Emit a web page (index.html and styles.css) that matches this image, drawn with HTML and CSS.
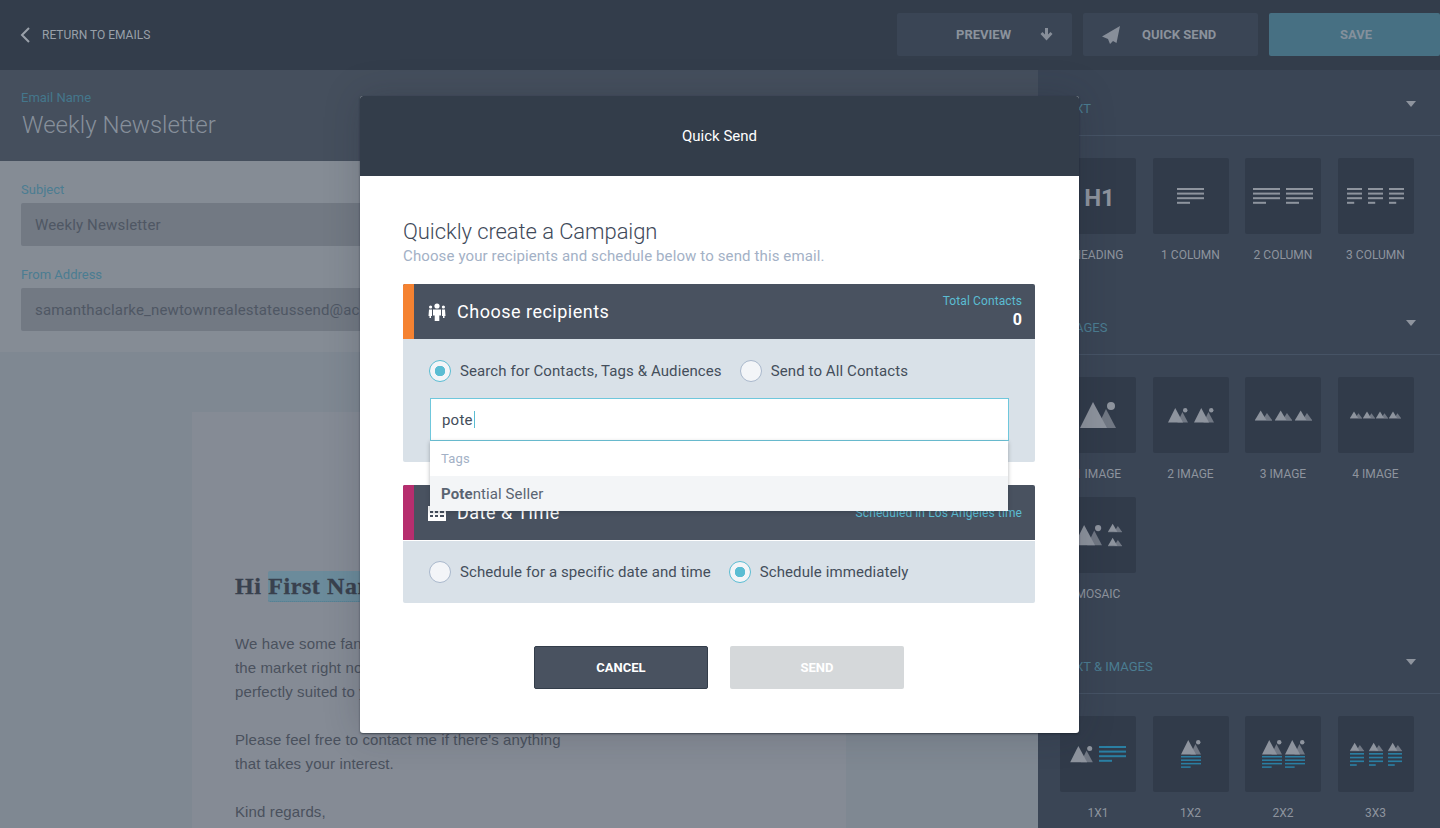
FILE: index.html
```html
<!DOCTYPE html>
<html>
<head>
<meta charset="utf-8">
<title>Quick Send</title>
<link rel="stylesheet" href="styles.css">
</head>
<body>
<svg class="defs" width="0" height="0">
  <symbol id="mtn" viewBox="0 0 36 27">
    <polygon points="17,26 26,7 36,26" fill="#717884"/>
    <polygon points="0,26 13,0 27,26" fill="#8e949e"/>
    <circle cx="31" cy="4" r="4" fill="#8e949e"/>
  </symbol>
  <symbol id="peaks" viewBox="0 0 27 16">
    <polygon points="12,15 19,4 27,15" fill="#717884"/>
    <polygon points="0,15 9,0 18,15" fill="#8e949e"/>
    <rect y="15" width="27" height="1" fill="#8e949e"/>
  </symbol>
  <symbol id="lines" viewBox="0 0 27 16" preserveAspectRatio="none">
    <rect width="27" height="2" fill="currentColor"/>
    <rect y="4.6" width="27" height="2" fill="currentColor"/>
    <rect y="9.2" width="27" height="2" fill="currentColor"/>
    <rect y="13.8" width="13" height="2" fill="currentColor"/>
  </symbol>
</svg>

<header class="topbar">
  <a class="back">
    <svg width="10" height="16" viewBox="0 0 10 16"><polyline points="9,1 2,8 9,15" fill="none" stroke="#9aa1aa" stroke-width="2"/></svg>
    RETURN TO EMAILS
  </a>
  <div class="actions">
    <button class="topbtn preview">PREVIEW
      <svg width="13" height="13" viewBox="0 0 13 13"><path d="M5 0h3v6.5l2.5-2.5 2 2-6 6.5-6-6.5 2-2L5 6.5z" fill="#878e99"/></svg>
    </button>
    <button class="topbtn quick">
      <svg width="18" height="18" viewBox="0 0 18 18"><path d="M18 0 0 10.5 6 13l2 5 3-3 3.500 2z" fill="#878e99"/></svg>
      QUICK SEND
    </button>
    <button class="topbtn save">SAVE</button>
  </div>
</header>

<div class="layout">
  <main class="editor">
    <section class="nameband">
      <label class="teal-label">Email Name</label>
      <h1>Weekly Newsletter</h1>
    </section>
    <section class="fields">
      <label class="teal-label">Subject</label>
      <div class="field">Weekly Newsletter</div>
      <label class="teal-label">From Address</label>
      <div class="field">samanthaclarke_newtownrealestateussend@ac</div>
    </section>
    <section class="canvas">
      <div class="paper">
        <h2>Hi <span class="merge">First Name</span></h2>
        <p>We have some fantastic properties on<br>the market right now that could be<br>perfectly suited to your needs.</p>
        <p>Please feel free to contact me if there's anything<br>that takes your interest.</p>
        <p>Kind regards,</p>
      </div>
    </section>
  </main>

  <aside class="sidebar">
    <section class="group">
      <div class="group-head"><span>TEXT</span><i class="caret"></i></div>
      <div class="tiles">
        <div class="item"><div class="tile h1">H1</div>HEADING</div>
        <div class="item"><div class="tile"><svg class="l27"><use href="#lines"/></svg></div>1 COLUMN</div>
        <div class="item"><div class="tile g6"><svg class="l27"><use href="#lines"/></svg><svg class="l27"><use href="#lines"/></svg></div>2 COLUMN</div>
        <div class="item"><div class="tile g6"><svg class="l15"><use href="#lines"/></svg><svg class="l15"><use href="#lines"/></svg><svg class="l15"><use href="#lines"/></svg></div>3 COLUMN</div>
      </div>
    </section>
    <section class="group">
      <div class="group-head"><span>IMAGES</span><i class="caret"></i></div>
      <div class="tiles">
        <div class="item"><div class="tile"><svg class="m36"><use href="#mtn"/></svg></div>1 IMAGE</div>
        <div class="item"><div class="tile g6"><svg class="m20"><use href="#mtn"/></svg><svg class="m20"><use href="#mtn"/></svg></div>2 IMAGE</div>
        <div class="item"><div class="tile g3"><svg class="p16"><use href="#peaks"/></svg><svg class="p16"><use href="#peaks"/></svg><svg class="p16"><use href="#peaks"/></svg></div>3 IMAGE</div>
        <div class="item"><div class="tile g1"><svg class="p12"><use href="#peaks"/></svg><svg class="p12"><use href="#peaks"/></svg><svg class="p12"><use href="#peaks"/></svg><svg class="p12"><use href="#peaks"/></svg></div>4 IMAGE</div>
        <div class="item"><div class="tile g6"><svg class="m28"><use href="#mtn"/></svg><div class="stack s4"><svg class="p14"><use href="#peaks"/></svg><svg class="p14"><use href="#peaks"/></svg></div></div>MOSAIC</div>
      </div>
    </section>
    <section class="group">
      <div class="group-head"><span>TEXT &amp; IMAGES</span><i class="caret"></i></div>
      <div class="tiles blue">
        <div class="item"><div class="tile g6"><svg class="m22"><use href="#mtn"/></svg><svg class="l27"><use href="#lines"/></svg></div>1X1</div>
        <div class="item"><div class="tile"><div class="stack"><svg class="m20"><use href="#mtn"/></svg><svg class="l20"><use href="#lines"/></svg></div></div>1X2</div>
        <div class="item"><div class="tile g3"><div class="stack"><svg class="m20"><use href="#mtn"/></svg><svg class="l20"><use href="#lines"/></svg></div><div class="stack"><svg class="m20"><use href="#mtn"/></svg><svg class="l20"><use href="#lines"/></svg></div></div>2X2</div>
        <div class="item"><div class="tile g5"><div class="stack"><svg class="p14"><use href="#peaks"/></svg><svg class="l14"><use href="#lines"/></svg></div><div class="stack"><svg class="p14"><use href="#peaks"/></svg><svg class="l14"><use href="#lines"/></svg></div><div class="stack"><svg class="p14"><use href="#peaks"/></svg><svg class="l14"><use href="#lines"/></svg></div></div>3X3</div>
      </div>
    </section>
  </aside>
</div>

<div class="modal">
  <div class="modal-head">Quick Send</div>
  <div class="modal-body">
    <h3>Quickly create a Campaign</h3>
    <p class="sub">Choose your recipients and schedule below to send this email.</p>

    <div class="panel">
      <div class="panel-head orange">
        <svg width="18" height="18" viewBox="0 0 18 18" fill="#fff">
          <circle cx="9" cy="3" r="2.6"/>
          <path d="M5 6.500h8v6h-1.700V18H6.700v-5.500H5z"/>
          <circle cx="2.600" cy="4" r="1.600"/><circle cx="15.400" cy="4" r="1.600"/>
          <path d="M1 6.500h3v6.500H3v2H1.500v-2H.5zM14 6.500h3l.5 6.500H16.500v2H15v-2h-1z"/>
        </svg>
        <span class="panel-title">Choose recipients</span>
        <div class="panel-info"><span>Total Contacts</span><b>0</b></div>
      </div>
      <div class="panel-body first">
        <div class="radios">
          <label class="radio on">Search for Contacts, Tags &amp; Audiences</label>
          <label class="radio">Send to All Contacts</label>
        </div>
        <div class="search">
          <div class="search-input">pote<i class="cursor"></i></div>
          <div class="dropdown">
            <div class="dd-label">Tags</div>
            <div class="dd-item"><b>Pote</b>ntial Seller</div>
          </div>
        </div>
      </div>
    </div>

    <div class="panel">
      <div class="panel-head crimson">
        <svg width="18" height="16" viewBox="0 0 18 16"><path d="M0 1h18v15H0z" fill="#fff"/><path d="M2 6h3v2H2zM7 6h3v2H7zM12 6h4v2h-4zM2 10h3v2H2zM7 10h3v2H7zM12 10h4v2h-4z" fill="#495260"/></svg>
        <span class="panel-title">Date &amp; Time</span>
        <div class="panel-info"><span>Scheduled in Los Angeles time</span></div>
      </div>
      <div class="panel-body">
        <div class="radios">
          <label class="radio">Schedule for a specific date and time</label>
          <label class="radio on">Schedule immediately</label>
        </div>
      </div>
    </div>

    <div class="modal-foot">
      <button class="btn cancel">CANCEL</button>
      <button class="btn send">SEND</button>
    </div>
  </div>
</div>
</body>
</html>
```

FILE: styles.css
```css
* {
  box-sizing: border-box;
}

html, body {
  margin: 0;
  height: 828px;
  overflow: hidden;
}

body {
  font-family: Roboto, "Liberation Sans", sans-serif;
  background: #3a4555;
  color: #8b929c;
  position: relative;
}

.defs {
  position: absolute;
}

/* top bar */
.topbar {
  height: 70px;
  padding: 0 0 1px 20px;
  background: #333d4b;
  display: flex;
  justify-content: space-between;
  align-items: center;
}

.back {
  display: flex;
  align-items: center;
  gap: 12px;
  font-size: 12px;
  color: #99a0a9;
}

.actions {
  display: flex;
  gap: 11px;
}

.topbtn {
  height: 43px;
  width: 175px;
  border: 0;
  border-radius: 2px;
  background: #3a4555;
  color: #8b929c;
  font: 700 13px Roboto, sans-serif;
  display: flex;
  align-items: center;
}

.preview {
  padding-left: 59px;
  gap: 29px;
}

.quick {
  padding-left: 19px;
  gap: 22px;
}

.save {
  width: 171px;
  background: #477083;
  justify-content: center;
  color: #84909c;
  padding-right: 3px;
}

/* left side */
.layout {
  display: flex;
  height: 758px;
}

.editor {
  width: 1038px;
  flex: none;
}

.nameband {
  height: 91px;
  background: #454f5d;
  padding: 20px 21px 0;
}

.teal-label {
  display: block;
  font-size: 13px;
  line-height: 16px;
  color: #4b7d92;
}

.nameband .teal-label {
  color: #44778c;
}

.nameband h1 {
  margin: 4px 0 0 1px;
  font-size: 24px;
  line-height: 30px;
  font-weight: 300;
  color: #87909b;
}

.fields {
  height: 191px;
  background: #858c95;
  padding: 21px 21px 0;
}

.field {
  height: 43px;
  margin: 5px 0 21px;
  padding: 0 14px;
  border-radius: 2px;
  background: #727983;
  color: #4f5764;
  font-size: 15px;
  line-height: 44px;
  letter-spacing: .15px;
  white-space: nowrap;
  overflow: hidden;
}

.canvas {
  height: 476px;
  background: #7f8892;
  padding: 60px 192px 0;
}

.paper {
  background: #858b95;
  height: 416px;
  padding: 159px 43px 0;
  color: #4a515d;
  font-family: "Liberation Sans", Arial, sans-serif;
  font-size: 15px;
  line-height: 24px;
  letter-spacing: .12px;
}

.paper h2 {
  margin: 0 0 31px;
  font: 700 24px/30px "Liberation Serif", serif;
  letter-spacing: .6px;
  -webkit-text-stroke: .3px #39414e;
  color: #39414e;
}

.merge {
  background: #6b8b9b;
  border-bottom: 1px dotted #4b7d92;
  border-radius: 2px;
  padding: 2px 0;
}

.paper p {
  margin: 0 0 24px;
}

/* right side */
.sidebar {
  width: 402px;
  flex: none;
}

.group + .group {
  margin-top: 11px;
}

.group-head {
  height: 66px;
  border-bottom: 1px solid #465365;
  padding: 31px 24px 0 22px;
  display: flex;
  justify-content: space-between;
  font-size: 13px;
  line-height: 16px;
  color: #4b7d92;
}

.caret {
  width: 0;
  height: 0;
  border-left: 5.500px solid transparent;
  border-right: 5.500px solid transparent;
  border-top: 6px solid #8e949e;
}

.tiles {
  display: grid;
  grid-template-columns: repeat(4, 76px);
  column-gap: 16.500px;
  padding: 22px 0 0 22px;
  color: #8e949e;
}

.tiles.blue .tile {
  color: #2a7fa3;
}

.item {
  height: 120px;
  text-align: center;
  font-size: 12px;
  line-height: 16px;
}

.tile {
  height: 76px;
  margin-bottom: 13px;
  border-radius: 2px;
  background: #313b4a;
  display: flex;
  justify-content: center;
  align-items: center;
  color: #8e949e;
}

.tile.h1 {
  padding: 3px 0 0 3px;
  font-size: 24px;
  font-weight: 700;
}

.g1 { gap: 1px; }
.g3 { gap: 3px; }
.g5 { gap: 5px; }
.g6 { gap: 6px; }

.stack {
  display: flex;
  flex-direction: column;
  gap: 1px;
}

.s4 {
  gap: 4px;
}

.l27 { width: 27px; height: 16px; }
.l20 { width: 20px; height: 12px; }
.l15 { width: 15px; height: 16px; }
.l14 { width: 14px; height: 13px; }
.m36 { width: 36px; height: 27px; }
.m28 { width: 28px; height: 21px; }
.m22 { width: 23px; height: 17px; }
.m20 { width: 20px; height: 15px; }
.p16 { width: 17px; height: 11px; }
.p14 { width: 14px; height: 10px; }
.p12 { width: 12px; height: 8px; }

/* modal */
.modal {
  position: absolute;
  left: 360px;
  top: 96px;
  width: 719px;
  height: 637px;
  border-radius: 3px;
  background: #fff;
  box-shadow: 0 1px 2px rgba(20, 28, 38, .6), 0 0 36px rgba(30, 38, 50, .22);
}

.modal-head {
  height: 80px;
  border-radius: 3px 3px 0 0;
  background: #333d4a;
  color: #fff;
  font-size: 15px;
  line-height: 81px;
  text-align: center;
}

.modal-body {
  padding: 43px 44px 0 43px;
}

.modal-body h3 {
  margin: 0;
  font-size: 22px;
  line-height: 26px;
  font-weight: 300;
  letter-spacing: -.08px;
  color: #3f4a5a;
}

.sub {
  margin: 1px 0 18px;
  font-size: 15px;
  line-height: 20px;
  letter-spacing: .12px;
  color: #a3b1c6;
}

.panel {
  margin-bottom: 23px;
}

.panel-head {
  height: 55px;
  background: #495260;
  padding: 0 13px 0 25px;
  border-radius: 2px 2px 0 0;
  display: flex;
  align-items: center;
  color: #fff;
  position: relative;
}

.panel-head::before {
  content: "";
  position: absolute;
  left: 0;
  top: 0;
  bottom: 0;
  width: 11px;
  border-radius: 2px 0 0 0;
}

.orange::before {
  background: #f58231;
}

.crimson::before {
  background: #b62e6e;
}

.panel-title {
  margin-left: 11px;
  font-size: 18px;
  letter-spacing: .5px;
}

.panel-info {
  margin-left: auto;
  display: flex;
  flex-direction: column;
  align-items: flex-end;
  font-size: 12px;
  line-height: 16px;
  letter-spacing: .1px;
  color: #5bbdd3;
}

.panel-info b {
  color: #fff;
  font-size: 16px;
  line-height: 21px;
}

.panel-body {
  min-height: 62px;
  margin-top: 1px;
  padding: 20px 26px 0;
  border-radius: 0 0 2px 2px;
  background: #d9e1e8;
}

.panel-body.first {
  margin-top: 0;
  height: 123px;
  padding-top: 21px;
}

.radios {
  display: flex;
  gap: 18px;
}

.radio {
  display: flex;
  align-items: center;
  height: 22px;
  font-size: 15px;
  letter-spacing: .1px;
  color: #444e5b;
}

.radio::before {
  content: "";
  width: 20px;
  height: 20px;
  margin-right: 9px;
  border-radius: 50%;
  border: 1.500px solid #a9b8cc;
  background: #f3f5f8;
}

.radio.on::before {
  border-color: #5bbdd3;
  background: radial-gradient(circle, #5bbdd3 0 5px, #f3f5f8 5.500px);
}

.search {
  position: relative;
  z-index: 2;
  margin: 16px 0 0 1px;
}

.search-input {
  height: 43px;
  padding-left: 11px;
  background: #fff;
  border: 1.500px solid #6fc7dc;
  font-size: 15px;
  line-height: 42px;
  letter-spacing: .2px;
  color: #444e5b;
}

.cursor {
  display: inline-block;
  width: 1px;
  height: 17px;
  margin-left: 1px;
  vertical-align: -3px;
  background: #5bbdd3;
}

.dropdown {
  position: absolute;
  left: 0;
  right: 1px;
  top: 43px;
  height: 70px;
  background: #fff;
  box-shadow: 0 1px 4px rgba(30, 38, 50, .35);
}

.dd-label {
  height: 35px;
  padding-left: 11px;
  font-size: 13px;
  line-height: 35px;
  letter-spacing: .2px;
  color: #a3b1c6;
}

.dd-item {
  height: 35px;
  padding-left: 11px;
  background: #f3f5f7;
  font-size: 15px;
  line-height: 36px;
  letter-spacing: .1px;
  color: #5a6472;
}

.modal-foot {
  display: flex;
  justify-content: center;
  gap: 22px;
  margin-top: 43px;
}

.btn {
  width: 174px;
  height: 43px;
  border-radius: 2px;
  font: 700 13px Roboto, sans-serif;
  color: #fff;
}

.cancel {
  background: #495260;
  border: 1px solid #333d4a;
}

.send {
  background: #d5d8da;
  border: 0;
}
```
